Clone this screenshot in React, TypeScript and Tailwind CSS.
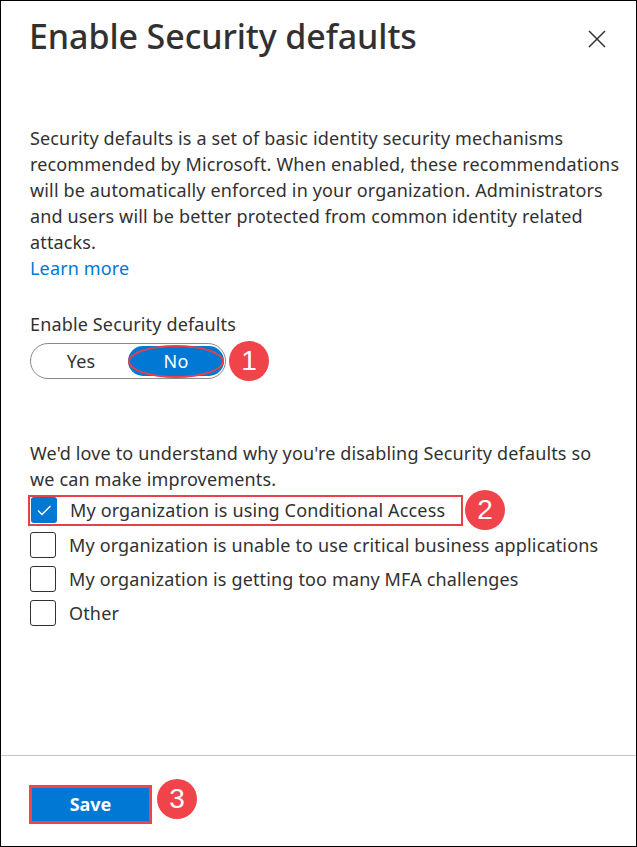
import React from "react";

function Badge({ n }: { n: string }) {
  return (
    <div className="w-[40px] h-[40px] rounded-full bg-[#f0434a] text-white flex items-center justify-center text-[28px] leading-none font-['Liberation_Sans',sans-serif] shrink-0">
      {n}
    </div>
  );
}

function Checkbox({ checked }: { checked?: boolean }) {
  return (
    <div
      className={
        checked
          ? "w-[26px] h-[26px] rounded-[3px] bg-[#0078d4] flex items-center justify-center shrink-0"
          : "w-[26px] h-[26px] rounded-[3px] border border-[#323130] bg-white shrink-0"
      }
    >
      {checked && (
        <svg width="18" height="18" viewBox="0 0 18 18" fill="none">
          <path d="M3 9.5 L7 13.5 L15.5 5" stroke="white" strokeWidth="1.4" />
        </svg>
      )}
    </div>
  );
}

export default function App() {
  const rows = [
    "My organization is unable to use critical business applications",
    "My organization is getting too many MFA challenges",
    "Other",
  ];
  return (
    <div className="w-[637px] h-[847px] border border-black bg-white flex flex-col text-[#323130] font-['Noto_Sans',sans-serif] overflow-hidden">
      <div className="flex items-start justify-between pl-[28px] pr-[30px] pt-[12px]">
        <h1 className="text-[34px] leading-[46px] font-medium tracking-[-0.1px]">Enable Security defaults</h1>
        <svg width="18" height="18" viewBox="0 0 18 18" className="mt-[17px]">
          <path d="M1 1 L17 17 M17 1 L1 17" stroke="#323130" strokeWidth="1.5" />
        </svg>
      </div>

      <div className="pl-[29px] pr-[8px] pt-[66px] text-[18px] leading-[26px] tracking-[0.15px]">
        <p>
          Security defaults is a set of basic identity security mechanisms
          <br />
          recommended by Microsoft. When enabled, these recommendations
          <br />
          will be automatically enforced in your organization. Administrators
          <br />
          and users will be better protected from common identity related
          <br />
          attacks.
        </p>
        <a className="text-[#0078d4] block">Learn more</a>

        <div className="mt-[30px]">Enable Security defaults</div>
        <div className="flex items-center gap-[3px] mt-[4px]">
          <div className="w-[196px] h-[36px] rounded-full border border-[#8a8886] flex items-center pl-[3px] pr-[1px] py-[3px]">
            <div className="flex-1 text-center">Yes</div>
            <div className="relative w-[96px] h-[30px] rounded-full bg-[#0078d4] text-white flex items-center justify-center">
              No
              <div className="absolute inset-x-0 top-[-1px] bottom-[-2px] rounded-[50%] border-2 border-[#e8404a]" />
            </div>
          </div>
          <Badge n="1" />
        </div>

        <p className="mt-[59px]">
          We'd love to understand why you're disabling Security defaults so
          <br />
          we can make improvements.
        </p>

        <div className="flex items-center gap-[2px] -mt-[2px] -ml-[2px]">
          <div className="flex items-center gap-[13px] border-2 border-[#e8404a] pl-[1px] pr-[12px] h-[31px] w-[435px]">
            <Checkbox checked />
            <span>My organization is using Conditional Access</span>
          </div>
          <Badge n="2" />
        </div>

        <div className="flex flex-col gap-[8px] mt-[2px]">
          {rows.map((r) => (
            <div key={r} className="flex items-center gap-[13px] h-[26px]">
              <Checkbox />
              <span>{r}</span>
            </div>
          ))}
        </div>
      </div>

      <div className="mt-auto border-t border-[#c8c6c4] h-[91px] pl-[28px] flex items-start pt-[29px] gap-[5px]">
        <button className="w-[123px] h-[39px] border-[3px] border-[#f0434a] bg-[#0078d4] text-white font-bold text-[18px] font-['Noto_Sans',sans-serif]">
          Save
        </button>
        <div className="-mt-[6px]">
          <Badge n="3" />
        </div>
      </div>
    </div>
  );
}
